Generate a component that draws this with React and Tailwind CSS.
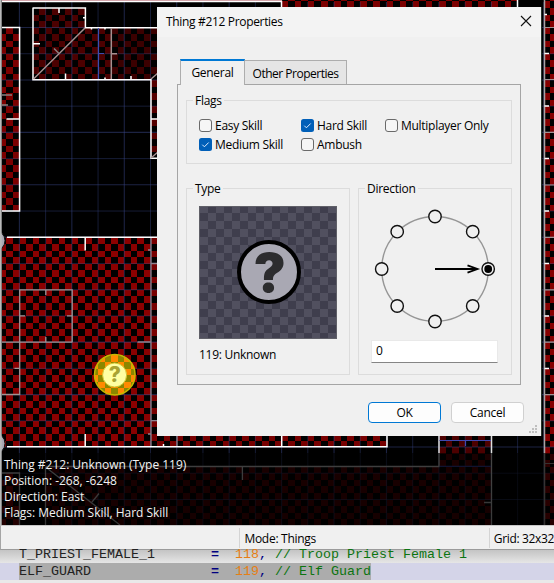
const ui = 'font-["Open_Sans","Noto_Sans",sans-serif]';

function Line({ d, c = "#fff", w = 1.5 }) {
  return <path d={d} stroke={c} strokeWidth={w} fill="none" />;
}

const STEP = 6.555;
const gridX = Array.from({ length: 21 }, (_, i) => 19.4 + i * 26.22);
const gridY = Array.from({ length: 20 }, (_, i) => 27.5 + i * 26.22);

// Outline of every filled cell of the world-aligned checkerboard inside a rectangle.
function cells(x0, y0, x1, y1) {
  let d = "";
  const i0 = Math.floor((x0 - 19.5) / STEP);
  const j0 = Math.floor((y0 - 237.4) / STEP);
  for (let i = i0; 19.5 + i * STEP < x1; i++) {
    for (let j = j0; 237.4 + j * STEP < y1; j++) {
      if ((i + j) % 2 !== 0) continue;
      const l = Math.max(x0, Math.round(19.5 + i * STEP));
      const r = Math.min(x1, Math.round(19.5 + (i + 1) * STEP));
      const t = Math.max(y0, Math.round(237.4 + j * STEP));
      const b = Math.min(y1, Math.round(237.4 + (j + 1) * STEP));
      if (r > l && b > t) d += `M${l} ${t}H${r}V${b}H${l}Z`;
    }
  }
  return d;
}

function Floor({ box, color }) {
  return <path d={cells(...box)} fill={color} />;
}

function MapView() {
  return (
    <svg width="554" height="525" viewBox="0 0 554 525" className="block">
      <defs>
        <linearGradient id="shade" x1="0" x2="0" y1="0" y2="1">
          <stop offset="0" stopColor="#000" stopOpacity=".66" />
          <stop offset="1" stopColor="#000" stopOpacity=".72" />
        </linearGradient>
        <clipPath id="coin"><circle cx="114.8" cy="374.7" r="20.3" /></clipPath>
      </defs>
      <rect width="554" height="525" fill="#000" />
      <g shapeRendering="crispEdges">
        <Floor box={[2, 28, 20, 211]} color="#7c0000" />
        <Floor box={[33, 8, 85, 28]} color="#4c0000" />
        <Floor box={[33, 28, 111, 80]} color="#4c0000" />
        <Floor box={[111, 28, 161, 80]} color="#3b0000" />
        <Floor box={[151, 80, 160, 158]} color="#560000" />
        <rect x="2" y="0" width="280" height="1" fill="#c98a90" />
        <Floor box={[282, 0, 517, 8]} color="#7c0000" />
        <Floor box={[2, 237, 151, 447]} color="#8b0000" />
        <Floor box={[151, 237, 177, 447]} color="#780000" />
        <Floor box={[177, 430, 387, 447]} color="#780000" />
        <Floor box={[439, 430, 491, 467]} color="#4c0000" />
        <Floor box={[46, 467, 491, 525]} color="#4c0000" />
        <Floor box={[2, 473, 19, 525]} color="#780000" />
        <Floor box={[544, 0, 554, 525]} color="#850000" />
      </g>
      <g stroke="#3a4a8c" strokeOpacity=".48">
        {gridX.map((x, i) => <path key={i} d={`M${x} 2V525`} strokeWidth={i % 2 ? 0.8 : 1.1} />)}
        {gridY.map((y, i) => <path key={i} d={`M2 ${y}H554`} strokeWidth={i % 2 ? 0.8 : 1.1} />)}
      </g>
      <Line d="M2 1.5H281.5V8" />
      <Line d="M517.5 0V8" />
      <Line d="M2 27.5H19.6V211H2M6.5 119H19.5" />
      <Line d="M33 8H85.4V27.7H158M33 7.5V79.8H151V158.3H158M59 8V13M83 17.7H85M33 43.8H40M65.5 73.5V79M91.5 28V29.5M105 28V29.5M131 76V79M105 77.5V79M151 119H157" />
      <Line d="M33.5 79L85 28M111.3 28V79M111 53.7H117M151 79L158 73M151 158L158 152" c="#a68f8f" />
      <Line d="M54 48.5L59 53.5M2 95H12M2 105H8" c="#858080" />
      <Line d="M98.5 28V79M98.5 53.5H104" c="#3b4db0" w={1.2} />
      <Line d="M7 237.3H158M85.2 238V250.5M7 446.8H387V436M85.2 434V446M163.5 444V447" />
      <Line d="M19.7 342V289.8H72.2V342M45.8 290V295M19.7 315.8H25M67 315.8H72M2 342.2H72.5M45.8 337V342M19.7 342V394.5H2M14.5 368.3H19.5" c="#a09494" w={1.3} />
      <Line d="M151 238V446M148 250H151M151 263.5H158M137.5 342H151M151 420.7H157M148 434H151M177 436V446" c="#8e8490" w={1.3} />
      <Line d="M281.7 436V446" />
      <Line d="M439 436V453M491.5 436V453" c="#ddd" />
      <Line d="M439 453V467M491.5 453V525" c="#ccc" w={1.3} />
      <Line d="M439.5 440.5H491M465.5 440.5V446" c="#4048b0" w={1.2} />
      <Line d="M439 466.3H491" c="#303a90" w={1.2} />
      <Line d="M45.7 466.5H439.5M242.4 467V480M2 473H19.5V525M45.5 467V525M45.5 467L120 525M92 502L99 493.5M484 502.5H491" c="#bcbcbc" w={1.3} />
      <Line d="M544.5 0V525" c="#aaa2a2" />
      <Line d="M544.5 14.5H547M544.5 53.5H549M544.5 106H549M544.5 158.5H549M544.5 211H549M544.5 263.5H549M544.5 316H549M544.5 368.5H549" />
      <Line d="M544.5 27.5H554M544.5 79.5H554M544.5 132.4H554M544.5 185H554M544.5 237.3H554M544.5 289.8H554M544.5 342.2H554M544.5 394.6H554M544.5 463.5H554" c="#a09494" w={1.2} />
      <circle cx="-5.5" cy="240.7" r="10.5" fill="#aaa9b4" stroke="#111" strokeWidth="1" />
      <circle cx="-5.5" cy="443.5" r="10.5" fill="#aaa9b4" stroke="#111" strokeWidth="1" />
      <circle cx="114.8" cy="374.7" r="20.3" fill="#8b8700" />
      <g clipPath="url(#coin)"><Floor box={[92, 352, 138, 398]} color="#ff8a00" /></g>
      <circle cx="114.8" cy="374.7" r="20.3" fill="none" stroke="#c4b900" strokeWidth="1.5" />
      <circle cx="114.6" cy="375" r="12" fill="#ffffa3" stroke="#d2c633" strokeWidth="1" />
      <text x="114.8" y="382.3" textAnchor="middle" fontSize="21" fontWeight="800" fill="#a9a332" fontFamily="Inter">?</text>
      <rect x="0" y="453" width="554" height="72" fill="url(#shade)" />
      <rect x="0" y="0" width="1.7" height="525" fill="#b9b9b9" />
    </svg>
  );
}

function Check({ label, on }) {
  return (
    <div className="flex h-[19px] items-center gap-[3px]">
      {on ? (
        <svg width="13" height="13" viewBox="0 0 13 13" className="shrink-0">
          <rect width="13" height="13" rx="2.5" fill="#005fb8" />
          <path d="M3.3 6.7L5.4 8.8L9.7 4.5" fill="none" stroke="#dcecff" strokeWidth="1" />
        </svg>
      ) : (
        <span className="size-[13px] shrink-0 rounded-[3px] border border-[#6a6a6a] bg-[#f6f6f6]" />
      )}
      <span className="whitespace-nowrap">{label}</span>
    </div>
  );
}

function Group({ title, className, children }) {
  return (
    <div className={`relative border border-[#dcdcdc] ${className}`}>
      <span className="absolute -top-[8px] left-[6px] bg-[#f0f0f0] px-[2px] leading-4">{title}</span>
      {children}
    </div>
  );
}

function Preview() {
  return (
    <svg width="138" height="133" viewBox="0 0 138 133" className="block">
      <defs>
        <pattern id="tile" x="1" y="-1" width="16" height="16" patternUnits="userSpaceOnUse">
          <rect width="16" height="16" fill="#3f3e4d" />
          <rect width="8" height="8" fill="#51505f" />
          <rect x="8" y="8" width="8" height="8" fill="#51505f" />
        </pattern>
      </defs>
      <rect x=".5" y=".5" width="137" height="132" fill="url(#tile)" stroke="#606068" shapeRendering="crispEdges" />
      <circle cx="70" cy="66" r="30" fill="#a9a8b3" stroke="#000" strokeWidth="4" />
      <text x="70.5" y="86" textAnchor="middle" fontSize="54" fontWeight="900" fill="#2c2c2e" fontFamily="Inter">?</text>
    </svg>
  );
}

const nodes = [[76, 27.5], [113.7, 42.7], [38.2, 42.7], [22.7, 80], [38.2, 117], [76, 132.5], [113.7, 117], [129.2, 80]];

function Compass() {
  return (
    <svg width="152" height="150" viewBox="0 0 152 150" className="block">
      <ellipse cx="76" cy="80" rx="53.3" ry="52.5" fill="none" stroke="#969696" strokeWidth="1.4" />
      {nodes.map(([x, y]) => <circle key={`${x}-${y}`} cx={x} cy={y} r="6.2" fill="#f0f0f0" stroke="#111" strokeWidth="1.4" />)}
      <circle cx="129.2" cy="80" r="3.9" fill="#000" />
      <path d="M76 80H118M108.5 76.3L118.5 80L108.5 83.7" fill="none" stroke="#000" strokeWidth="1.8" />
    </svg>
  );
}

function Dialog() {
  return (
    <div className={`absolute left-[157px] top-[7px] flex h-[429px] w-[385px] flex-col border-r border-[#26332c] bg-[#f0f0f0] text-[12px] tracking-[-0.28px] text-black ${ui}`}>
      <header className="flex h-[30px] shrink-0 items-center justify-between bg-[#f3f3f3] pl-[9px] pr-[9px]">
        <span className="tracking-[-0.33px]">Thing #212 Properties</span>
        <svg width="12" height="12" viewBox="0 0 12 12" className="-mt-[2px]"><path d="M1 1L11 11M11 1L1 11" stroke="#111" strokeWidth="1.1" /></svg>
      </header>
      <div className="mt-[22px] flex h-[25px] shrink-0 items-end pl-[23px]">
        <div className="relative z-10 -mb-px flex h-[26px] w-[65px] items-center justify-center border-x border-t-2 border-x-[#adadad] border-t-[#0078d4] bg-[#f0f0f0]">General</div>
        <div className="-ml-px flex h-[24px] w-[103px] items-center justify-center border border-b-0 border-[#adadad] bg-[#e5e5e5] pt-[2px] tracking-[-0.5px]">Other Properties</div>
      </div>
      <div className="ml-[20px] h-[301px] w-[344px] shrink-0 border border-[#a5a5a5] px-[8px] pt-[15px]">
        <Group title="Flags" className="h-[64px] w-[326px]">
          <div className="grid grid-cols-[102px_84px_1fr] pl-[12px] pt-[15px]">
            <Check label="Easy Skill" />
            <Check label="Hard Skill" on />
            <Check label="Multiplayer Only" />
            <Check label="Medium Skill" on />
            <Check label="Ambush" />
          </div>
        </Group>
        <div className="mt-[24px] flex justify-between">
          <Group title="Type" className="h-[187px] w-[164px] px-[12px] pt-[17px]">
            <Preview />
            <div className="mt-[7px] leading-[18px]">119: Unknown</div>
          </Group>
          <Group title="Direction" className="h-[187px] w-[154px]">
            <Compass />
            <div className="ml-[12px] mt-px flex h-[23px] w-[127px] items-center border border-[#e9e9e9] border-b-[#858585] bg-white px-[4px] pb-px">0</div>
          </Group>
        </div>
      </div>
      <div className="mt-[17px] flex gap-[10px] pl-[211px]">
        <div className="flex h-[21px] w-[73px] items-center justify-center rounded-[4px] border border-[#0078d4] bg-[#fdfdfd]">OK</div>
        <div className="flex h-[21px] w-[73px] items-center justify-center rounded-[4px] border border-[#d0d0d0] bg-[#fdfdfd]">Cancel</div>
      </div>
      <svg width="9" height="9" viewBox="0 0 9 9" className="absolute bottom-[2px] right-[3px]" fill="#bfbfbf">
        <path d="M6 0h2v2h-2zM3 3h2v2h-2zM6 3h2v2h-2zM0 6h2v2h-2zM3 6h2v2h-2zM6 6h2v2h-2z" />
      </svg>
    </div>
  );
}

export default function App() {
  return (
    <div className="relative h-[583px] w-[554px] overflow-hidden bg-[#e9e9e9]">
      <MapView />
      <div className={`absolute left-[4px] top-[457px] whitespace-nowrap text-[12px] leading-[16px] tracking-[-0.02px] text-[#f2f2f2] ${ui}`}>
        <div>Thing #212: Unknown (Type 119)</div>
        <div>Position: -268, -6248</div>
        <div>Direction: East</div>
        <div>Flags: Medium Skill, Hard Skill</div>
      </div>
      <footer className={`flex h-[25px] items-center border-b border-l border-t border-b-[#9b9b9b] border-l-[#a5a5a5] border-t-[#c8c8c8] bg-[#f0f0f0] text-[12px] tracking-[-0.28px] text-black ${ui}`}>
        <div className="h-[20px] w-[240px] border-r border-[#d4d4d4]" />
        <div className="flex h-[20px] w-[250px] items-center border-r border-[#d4d4d4] pl-[4px] pt-[3px]">Mode: Things</div>
        <div className="flex h-[20px] items-center whitespace-nowrap pl-[4px] pt-[3px] tracking-[-0.35px]">Grid: 32x32</div>
      </footer>
      <div className='whitespace-pre font-["Liberation_Mono",monospace] text-[13.33px] text-[#222]'>
        <div className="h-[13px] bg-linear-to-b from-[#c4c4c4] to-[#e6e6e6] pl-[19px] leading-[9px]">
          T_PRIEST_FEMALE_1{"       "}<b className="text-[#000080]">=</b>{"  "}<span className="text-[#e67e14]">118</span><span className="text-[#000080]">,</span> <span className="text-[#0c7410]">// Troop Priest Female 1</span>
        </div>
        <div className="flex h-[17px] bg-[#d4d4e8] leading-[17px]">
          <div className="ml-[19px] w-[352px] bg-[#acacac]">
            ELF_GUARD{"               "}<b className="text-[#000080]">=</b>{"  "}<span className="text-[#e67e14]">119</span><span className="text-[#000080]">,</span> <span className="text-[#0c7410]">// Elf Guard</span>
          </div>
        </div>
      </div>
      <Dialog />
    </div>
  );
}
